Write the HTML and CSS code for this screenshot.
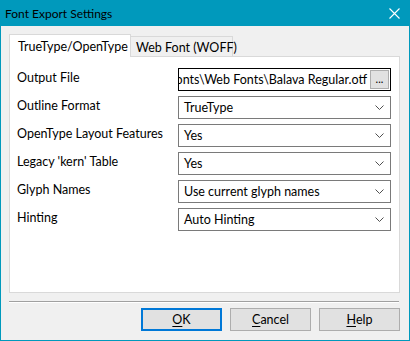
FILE: index.html
```html
<!DOCTYPE html>
<html>
<head>
<meta charset="utf-8">
<link rel="stylesheet" href="styles.css">
</head>
<body>
<div class="window">
  <div class="titlebar">
    <span class="title">Font Export Settings</span>
    <svg class="close" width="11" height="11" viewBox="0 0 11 11"><path d="M0.5 0.5 L10.5 10.5 M10.5 0.5 L0.5 10.5" stroke="#ffffff" stroke-width="1.1" fill="none"/></svg>
  </div>
  <div class="body">
    <div class="tabs">
      <div class="tab active">TrueType/OpenType</div>
      <div class="tab">Web Font (WOFF)</div>
    </div>
    <div class="panel">
      <div class="row">
        <span class="label">Output File</span>
        <div class="filebox">
          <div class="path"><span>Fonts\Web Fonts\Balava Regular.otf</span></div>
          <div class="browse">...</div>
        </div>
      </div>
      <div class="row">
        <span class="label">Outline Format</span>
        <div class="select"><span>TrueType</span><svg class="chev" width="9" height="5" viewBox="0 0 9 5"><path d="M0.5 0.5 L4.5 4.5 L8.5 0.5" stroke="#505050" fill="none"/></svg></div>
      </div>
      <div class="row">
        <span class="label">OpenType Layout Features</span>
        <div class="select"><span>Yes</span><svg class="chev" width="9" height="5" viewBox="0 0 9 5"><path d="M0.5 0.5 L4.5 4.5 L8.5 0.5" stroke="#505050" fill="none"/></svg></div>
      </div>
      <div class="row">
        <span class="label">Legacy 'kern' Table</span>
        <div class="select"><span>Yes</span><svg class="chev" width="9" height="5" viewBox="0 0 9 5"><path d="M0.5 0.5 L4.5 4.5 L8.5 0.5" stroke="#505050" fill="none"/></svg></div>
      </div>
      <div class="row">
        <span class="label">Glyph Names</span>
        <div class="select"><span>Use current glyph names</span><svg class="chev" width="9" height="5" viewBox="0 0 9 5"><path d="M0.5 0.5 L4.5 4.5 L8.5 0.5" stroke="#505050" fill="none"/></svg></div>
      </div>
      <div class="row">
        <span class="label">Hinting</span>
        <div class="select"><span>Auto Hinting</span><svg class="chev" width="9" height="5" viewBox="0 0 9 5"><path d="M0.5 0.5 L4.5 4.5 L8.5 0.5" stroke="#505050" fill="none"/></svg></div>
      </div>
    </div>
    <div class="separator"></div>
    <div class="buttons">
      <div class="btn default"><u>O</u>K</div>
      <div class="btn"><u>C</u>ancel</div>
      <div class="btn"><u>H</u>elp</div>
    </div>
  </div>
</div>
</body>
</html>
```
FILE: styles.css
```css
* { box-sizing: border-box; }
html, body { margin: 0; padding: 0; background: #f0f0f0; }
body {
  font-family: "Lato", "Noto Sans", sans-serif;
  font-size: 12.5px;
  color: #000;
}
.window {
  width: 410px;
  height: 341px;
  border: 1px solid #0099bc;
  border-top: 0;
  background: #f0f0f0;
  display: flex;
  flex-direction: column;
}
.titlebar {
  height: 26px;
  background: #0099bc;
  margin: 0 -1px;
  display: flex;
  align-items: center;
  justify-content: space-between;
  padding: 0 10px 0 5px;
}
.title { color: #000; font-size: 12px; }
.close { display: block; }
.body {
  flex: 1;
  display: flex;
  flex-direction: column;
  padding: 8px 9px 9px 8px;
}
.tabs {
  display: flex;
  align-items: flex-end;
  height: 22px;
  position: relative;
  z-index: 1;
}
.tab {
  height: 20px;
  border: 1px solid #d9d9d9;
  border-bottom: 0;
  background: #f0f0f0;
  padding: 1px 0 0 5px;
  display: flex;
  align-items: center;
  white-space: nowrap;
}
.tab.active {
  height: 23px;
  margin-bottom: -1px;
  background: #fff;
  padding: 0 0 0 8px;
  width: 122px;
  border-right: 1px solid #d9d9d9;
}
.tab:not(.active) {
  border-left: 0;
  width: 102px;
}
.panel {
  height: 237px;
  background: #fff;
  border: 1px solid #d9d9d9;
  padding: 11px 8px 0 7px;
  display: flex;
  flex-direction: column;
  gap: 5px;
}
.row {
  display: flex;
  align-items: center;
  justify-content: space-between;
  height: 23px;
}
.label { line-height: 16px; padding-bottom: 3px; }
.filebox {
  width: 213px;
  height: 23px;
  border: 1px solid #000;
  display: flex;
  align-items: center;
  padding-right: 1px;
}
.path {
  flex: 1;
  min-width: 0;
  overflow: hidden;
  display: flex;
  justify-content: flex-end;
  white-space: nowrap;
  padding-right: 3px;
}
.browse {
  width: 19px;
  height: 19px;
  flex: none;
  background: #e1e1e1;
  border: 1px solid #adadad;
  display: flex;
  align-items: center;
  justify-content: center;
  font-size: 11px;
  line-height: 1;
  padding-bottom: 3px;
}
.select {
  width: 213px;
  height: 23px;
  border: 1px solid #7a7a7a;
  display: flex;
  align-items: center;
  justify-content: space-between;
  padding: 0 6px 0 5px;
}
.chev { display: block; }
.separator {
  margin-top: 8px;
  height: 2px;
  border-top: 1px solid #a0a0a0;
  border-bottom: 1px solid #fff;
  margin-right: 1px;
}
.buttons {
  margin-top: 5px;
  display: flex;
  justify-content: flex-end;
  gap: 8px;
}
.btn {
  width: 81px;
  height: 23px;
  background: #e1e1e1;
  border: 1px solid #adadad;
  display: flex;
  align-items: center;
  justify-content: center;
}
.btn.default { border: 2px solid #0078d7; }
.btn u { text-underline-offset: 2px; }
```
